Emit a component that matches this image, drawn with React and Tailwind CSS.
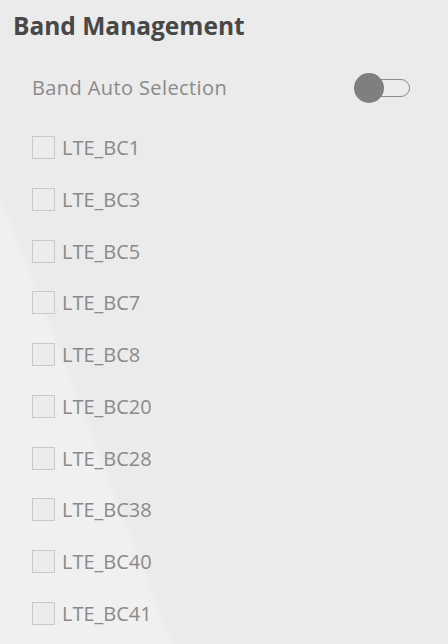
import { useState } from 'react';

const bands = ['LTE_BC1', 'LTE_BC3', 'LTE_BC5', 'LTE_BC7', 'LTE_BC8', 'LTE_BC20', 'LTE_BC28', 'LTE_BC38', 'LTE_BC40', 'LTE_BC41'];

function Toggle({ on, onChange }) {
  return (
    <button
      type="button"
      onClick={() => onChange(!on)}
      className="relative w-[56px] h-[30px] flex items-center"
    >
      <span className="ml-[5px] w-[51px] h-[18px] rounded-full border-[1.5px] border-[#8a8a8a]" />
      <span className="absolute left-0 top-0 w-[30px] h-[30px] rounded-full bg-[#7f7f7f]" />
    </button>
  );
}

export default function App() {
  const [auto, setAuto] = useState(false);
  const [checked, setChecked] = useState({});

  return (
    <div className="w-full h-[644px] overflow-hidden bg-[linear-gradient(69deg,#f0f0f0_158px,#ebebeb_163px)] font-['Open_Sans',sans-serif]">
      <h2 className="pl-[13px] pt-[10px] text-[24.5px] leading-[32px] font-bold text-[#474747]">
        Band Management
      </h2>

      <div className="mt-[31px] pl-[32px] pr-[38px] flex items-center justify-between h-[30px]">
        <span className="text-[20px] tracking-[0.4px] text-[#8a8a8a]">Band Auto Selection</span>
        <Toggle on={auto} onChange={setAuto} />
      </div>

      <div className="mt-[33px] pl-[32px] flex flex-col">
        {bands.map((b) => (
          <label key={b} className="h-[51.75px] flex items-start cursor-pointer">
            <input
              type="checkbox"
              checked={!!checked[b]}
              onChange={() => setChecked({ ...checked, [b]: !checked[b] })}
              className="appearance-none w-[23px] h-[23px] border-[1.5px] border-[#c9c9c9] bg-[#ececec] checked:bg-[#7f7f7f] shrink-0"
            />
            <span className="ml-[7px] text-[20px] leading-[23px] text-[#8a8a8a]">{b}</span>
          </label>
        ))}
      </div>
    </div>
  );
}
